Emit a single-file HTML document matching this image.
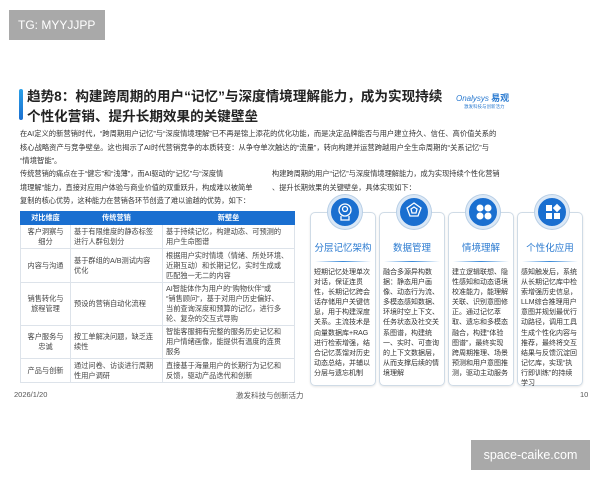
<!DOCTYPE html>
<html><head><meta charset="utf-8"><style>
*{margin:0;padding:0;box-sizing:border-box}
body{width:600px;height:480px;background:#fff;position:relative;overflow:hidden;font-family:"Liberation Sans","Noto Sans CJK SC",sans-serif;color:#333}
.a{position:absolute;white-space:nowrap}
.tg{left:9px;top:10px;width:96px;height:30px;background:#a9a9a9;color:#fff;font-size:12px;line-height:30px;padding-left:9px}
.bar{left:19px;top:89px;width:4px;height:31px;background:linear-gradient(#2aa0e8,#1a6fd0);border-radius:2px}
.t{left:27px;font-size:13.6px;font-weight:bold;color:#222;line-height:20px}
.p{font-size:7.3px;color:#333;line-height:13.5px}
table{position:absolute;left:20px;top:211px;width:275px;border-collapse:collapse;font-size:7.2px;color:#444;table-layout:fixed}
td,th{border:1px solid #dde3ea;padding:0 3px;line-height:10px;vertical-align:middle;white-space:nowrap;overflow:hidden}
th{background:#1a6fd0;color:#fff;height:13px;font-weight:bold;border-color:#1a6fd0}
td.c{text-align:center}
.card{position:absolute;top:212px;width:66px;height:174px;border:1px solid #cfdbe6;border-radius:5px;box-shadow:0 1px 2px rgba(0,0,0,.1)}
.cir{position:absolute;top:195px;width:34px;height:34px;border-radius:50%;background:#1a6fd0;border:3px solid #dbe8f6;box-shadow:0 0 0 1px #b8cfe6}
.ct{position:absolute;top:240px;width:66px;text-align:center;color:#2a7ad0;font-size:9.5px}
.ln{position:absolute;top:261px;height:1px;width:56px;background:linear-gradient(90deg,#fff,#3a8ad8,#fff)}
.cb{position:absolute;top:268px;width:58px;font-size:7px;line-height:10.1px;color:#333;white-space:normal;word-break:break-all}
.f{font-size:7.5px;color:#555;top:390px}
</style></head><body>
<div class="a tg">TG: MYYJJPP</div>
<div class="a bar"></div>
<div class="a t" style="top:87px">趋势8：构建跨周期的用户“记忆”与深度情境理解能力，成为实现持续</div>
<div class="a t" style="top:107px">个性化营销、提升长期效果的关键壁垒</div>
<div class="a" style="left:456px;top:91px;font-size:8px;color:#2a7ad0;font-style:italic">Onalysys <b style="font-style:normal;font-size:9px">易观</b></div>
<div class="a" style="left:464px;top:104px;font-size:4.5px;color:#2a7ad0">激发科技与创新活力</div>
<div class="a p" style="left:20px;top:127px">在AI定义的新营销时代，“跨周期用户记忆”与“深度情境理解”已不再是锦上添花的优化功能，而是决定品牌能否与用户建立持久、信任、高价值关系的<br>核心战略资产与竞争壁垒。这也揭示了AI时代营销竞争的本质转变：从争夺单次触达的“流量”，转向构建并运营跨越用户全生命周期的“关系记忆”与<br>“情境智能”。</div>
<div class="a p" style="left:20px;top:167px;font-size:7.2px">传统营销的痛点在于“健忘”和“浅薄”，而AI驱动的“记忆”与“深度情<br>境理解”能力，直接对应用户体验与商业价值的双重跃升，构成难以被简单<br>复制的核心优势，这种能力在营销各环节创造了难以逾越的优势，如下：</div>
<div class="a p" style="left:272px;top:167px;font-size:7.2px">构建跨周期的用户“记忆”与深度情境理解能力，成为实现持续个性化营销<br>、提升长期效果的关键壁垒，具体实现如下：</div>
<table>
<col style="width:50px"><col style="width:92px"><col>
<tr><th>对比维度</th><th>传统营销</th><th>新壁垒</th></tr>
<tr style="height:24px"><td class="c">客户洞察与<br>细分</td><td>基于有限维度的静态标签<br>进行人群包划分</td><td>基于持续记忆，构建动态、可预测的<br>用户生命图谱</td></tr>
<tr style="height:34px"><td class="c">内容与沟通</td><td>基于群组的A/B测试内容<br>优化</td><td>根据用户实时情境（情绪、所处环境、<br>近期互动）和长期记忆，实时生成或<br>匹配独一无二的内容</td></tr>
<tr style="height:43px"><td class="c">销售转化与<br>旅程管理</td><td>预设的营销自动化流程</td><td>AI智能体作为用户的“购物伙伴”或<br>“销售顾问”，基于对用户历史偏好、<br>当前查询深度和预算的记忆，进行多<br>轮、复杂的交互式导购</td></tr>
<tr style="height:33px"><td class="c">客户服务与<br>忠诚</td><td>按工单解决问题，缺乏连<br>续性</td><td>智能客服拥有完整的服务历史记忆和<br>用户情绪画像，能提供有温度的连贯<br>服务</td></tr>
<tr style="height:24px"><td class="c">产品与创新</td><td>通过问卷、访谈进行周期<br>性用户调研</td><td>直接基于海量用户的长期行为记忆和<br>反馈，驱动产品迭代和创新</td></tr>
</table>
<div class="card" style="left:310px"></div><div class="card" style="left:379px"></div><div class="card" style="left:448px"></div><div class="card" style="left:517px"></div>
<div class="cir" style="left:328px"></div><div class="cir" style="left:397px"></div><div class="cir" style="left:466px"></div><div class="cir" style="left:535px"></div>
<svg style="position:absolute;left:0;top:0" width="600" height="480" fill="none" stroke="#fff" stroke-width="1.3">
<circle cx="345" cy="210" r="6"/><circle cx="345" cy="209" r="2.5"/><path d="M341 216v4h8v-4"/>
<path d="M414 203l7 5-3 8h-8l-3-8z"/><path d="M414 207l3 2-1 4h-4l-1-4z"/>
<g fill="#fff" stroke="none"><circle cx="480" cy="208" r="3.5"/><circle cx="488" cy="208" r="3.5"/><circle cx="480" cy="216" r="3.5"/><circle cx="488" cy="216" r="3.5"/>
<rect x="546" y="205" width="6" height="6"/><rect x="546" y="213" width="6" height="6"/><rect x="554" y="213" width="6" height="6"/><rect x="554" y="205" width="6" height="6" transform="rotate(45 557 208)"/></g>
</svg>
<div class="ct" style="left:310px">分层记忆架构</div><div class="ct" style="left:379px">数据管理</div><div class="ct" style="left:448px">情境理解</div><div class="ct" style="left:517px">个性化应用</div>
<div class="ln" style="left:315px"></div><div class="ln" style="left:384px"></div><div class="ln" style="left:453px"></div><div class="ln" style="left:522px"></div>
<div class="cb" style="left:314px">短期记忆处理单次对话，保证连贯性，长期记忆跨会话存储用户关键信息，用于构建深度关系。主流技术是向量数据库+RAG进行检索增强，结合记忆蒸馏对历史动态总结，并辅以分层与遗忘机制</div>
<div class="cb" style="left:383px">融合多源异构数据：静态用户画像、动态行为流、多模态感知数据、环境时空上下文、任务状态及社交关系图谱，构建统一、实时、可查询的上下文数据层，从而支撑后续的情境理解</div>
<div class="cb" style="left:452px">建立逻辑联想、隐性感知和动态语境校准能力，能理解关联、识别意图修正。通过记忆萃取、遗忘和多模态融合，构建“体验图谱”，最终实现跨周期推理、场景预测和用户意图推测，驱动主动服务</div>
<div class="cb" style="left:521px">感知触发后，系统从长期记忆库中检索增强历史信息，LLM综合推理用户意图并规划最优行动路径，调用工具生成个性化内容与推荐，最终将交互结果与反馈沉淀回记忆库，实现“执行即训练”的持续学习</div>
<div class="a f" style="left:14px">2026/1/20</div>
<div class="a f" style="left:236px">激发科技与创新活力</div>
<div class="a f" style="left:580px">10</div>
<div class="a" style="left:471px;top:440px;width:119px;height:30px;background:#a9a9a9;color:#fff;font-size:12.5px;line-height:30px;text-align:center">space-caike.com</div>
</body></html>
